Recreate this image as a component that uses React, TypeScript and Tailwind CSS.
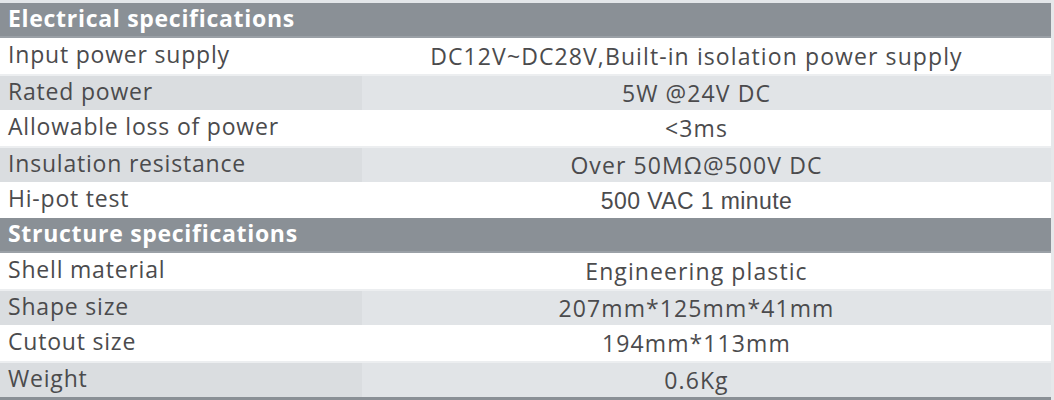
const electrical: [string, string, boolean?][] = [
  ['Input power supply', 'DC12V~DC28V,Built-in isolation power supply'],
  ['Rated power', '5W @24V DC'],
  ['Allowable loss of power', '<3ms'],
  ['Insulation resistance', 'Over 50MΩ@500V DC'],
  ['Hi-pot test', '500 VAC 1 minute', true],
]

const structure: [string, string, boolean?][] = [
  ['Shell material', 'Engineering plastic'],
  ['Shape size', '207mm*125mm*41mm'],
  ['Cutout size', '194mm*113mm'],
  ['Weight', '0.6Kg'],
]

function Header({ title }: { title: string }) {
  return (
    <div className="h-[35px] bg-[#8a9096] border-b-2 border-[#9aa0a6] flex items-center pl-[8px]">
      <span className="text-white font-bold text-[23px] tracking-[0.7px] -mt-[3px]">{title}</span>
    </div>
  )
}

function Row({ label, value, shaded, arial }: { label: string; value: string; shaded: boolean; arial?: boolean }) {
  return (
    <div
      className={`grid grid-cols-[362px_1fr] h-[36px] ${
        shaded ? 'bg-[#e1e4e7] border-t-2 border-[#eceef0]' : 'bg-white'
      }`}
    >
      <div className={`flex items-center pl-[8px] ${shaded ? 'bg-[#dadde0]' : ''}`}>
        <span className="text-[23px] tracking-[0.8px] text-[#4b4b4d] -mt-[3px]">{label}</span>
      </div>
      <div className="flex items-center justify-center pr-[20px]">
        <span
          className={`text-[23px] text-[#4b4b4d] ${
            arial ? "font-['Liberation_Sans',Arial,sans-serif] tracking-[0.4px] mt-[2px]" : 'tracking-[1.1px]'
          }`}
        >
          {value}
        </span>
      </div>
    </div>
  )
}

function Section({ title, rows }: { title: string; rows: [string, string, boolean?][] }) {
  return (
    <>
      <Header title={title} />
      {rows.map(([label, value, arial], i) => (
        <Row key={label} label={label} value={value} arial={arial} shaded={i % 2 === 1} />
      ))}
    </>
  )
}

export default function App() {
  return (
    <div className="w-[1054px] h-[400px] overflow-hidden bg-white font-['Open_Sans','Noto_Sans',sans-serif] leading-none">
      <div className="w-[1051px] border-r-[3px] border-[#e6e8ea] box-content">
        <div className="h-[3px] bg-[#e3e6e9]" />
        <Section title="Electrical specifications" rows={electrical} />
        <Section title="Structure specifications" rows={structure} />
        <div className="h-[6px] bg-[#8a9096]" />
      </div>
    </div>
  )
}
